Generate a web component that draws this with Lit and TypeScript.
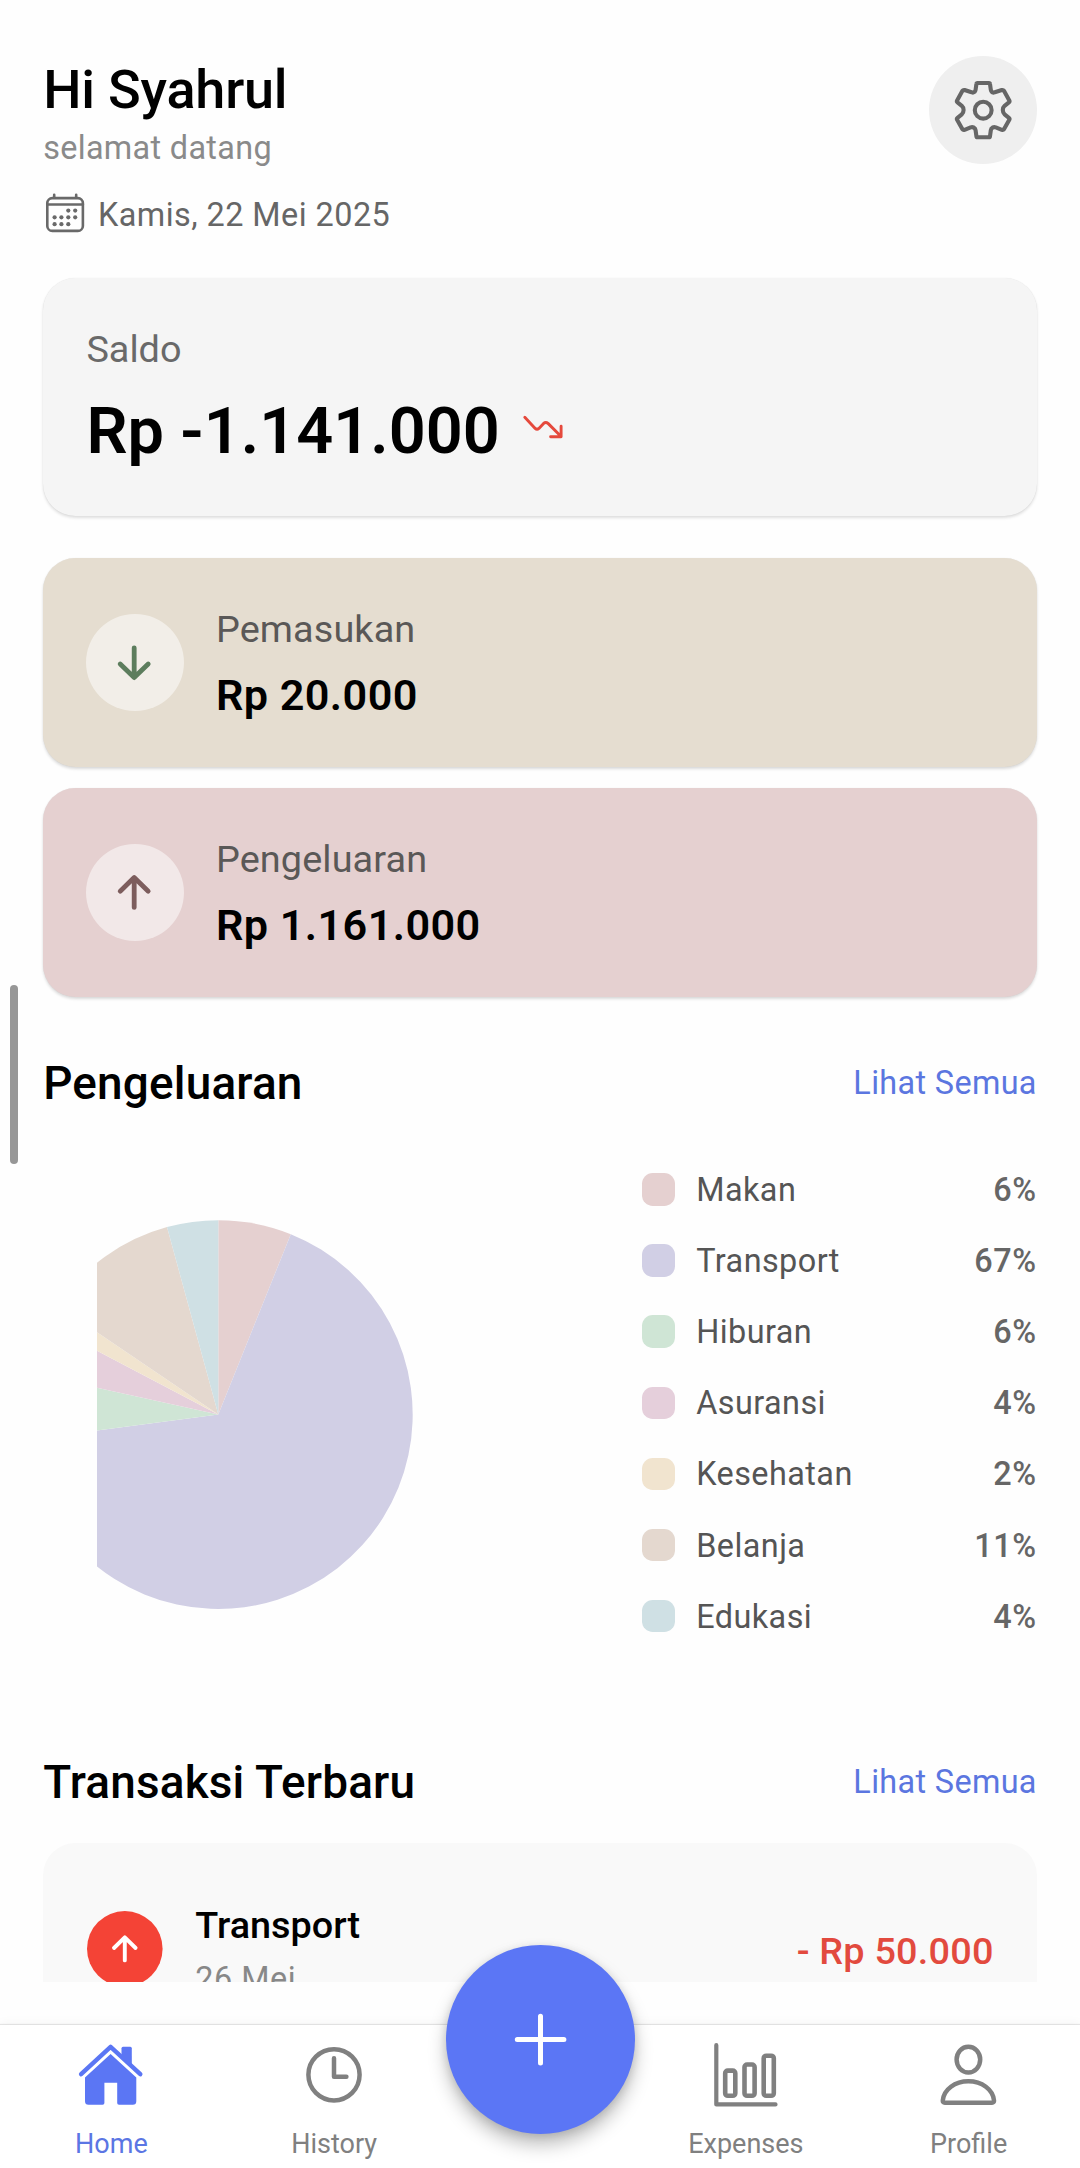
import { LitElement, html, svg, css } from "lit";
import { customElement } from "lit/decorators.js";

interface Category {
  name: string;
  percent: number;
  color: string;
  /** Angle in degrees, clockwise from the top, where the slice ends. */
  end: number;
}

const CATEGORIES: Category[] = [
  { name: "Makan", percent: 6, color: "#e5d0d0", end: 21.9 },
  { name: "Transport", percent: 67, color: "#d1cfe5", end: 262.5 },
  { name: "Hiburan", percent: 6, color: "#cfe5d5", end: 282.5 },
  { name: "Asuransi", percent: 4, color: "#e5cfdb", end: 297.8 },
  { name: "Kesehatan", percent: 2, color: "#f1e4cf", end: 304.2 },
  { name: "Belanja", percent: 11, color: "#e4d8cf", end: 344.7 },
  { name: "Edukasi", percent: 4, color: "#cfe0e4", end: 360 },
];

const RADIUS = 194.4;

function point(deg: number): string {
  const a = (deg * Math.PI) / 180;
  return `${(RADIUS * Math.sin(a)).toFixed(2)} ${(-RADIUS * Math.cos(a)).toFixed(2)}`;
}

function slice(start: number, end: number): string {
  const large = end - start > 180 ? 1 : 0;
  return `M0 0L${point(start)}A${RADIUS} ${RADIUS} 0 ${large} 1 ${point(end)}Z`;
}

const calendarIcon = svg`
  <g fill="none" stroke="#696969" stroke-width="2.6" stroke-linecap="round">
    <rect x="4.3" y="5.1" width="35.6" height="32.8" rx="5"/>
    <path d="M4.3 11.5H39.9M11.2 1.8V4.5M33.2 1.8V4.5"/>
  </g>
  <g fill="#696969">
    <circle cx="25.3" cy="17.6" r="2.1"/><circle cx="32.2" cy="17.6" r="2.1"/>
    <circle cx="11.6" cy="24.3" r="2.1"/><circle cx="18.4" cy="24.3" r="2.1"/>
    <circle cx="25.3" cy="24.3" r="2.1"/><circle cx="32.2" cy="24.3" r="2.1"/>
    <circle cx="11.6" cy="31.2" r="2.1"/><circle cx="18.4" cy="31.2" r="2.1"/>
    <circle cx="25.3" cy="31.2" r="2.1"/>
  </g>`;

const NAV_ICONS = {
  home: svg`
    <path d="M-29.9 34.2L-0.4 6.9L29.3 34.2" fill="none" stroke="currentColor" stroke-width="4.4" stroke-linecap="round" stroke-linejoin="round"/>
    <path d="M10.5 16V8.2Q10.5 6.7 12 6.7H19.3Q20.8 6.7 20.8 8.2V27Z" fill="currentColor"/>
    <path d="M-0.4 14L25.3 37.6V61.2Q25.3 64.7 21.8 64.7H8Q6.2 64.7 6.2 62.9V42.8H-6.6V62.9Q-6.6 64.7 -8.4 64.7H-22.5Q-26 64.7 -26 61.2V37.6Z" fill="currentColor"/>`,
  history: svg`
    <g fill="none" stroke="currentColor" stroke-width="4.5" stroke-linecap="round" stroke-linejoin="round">
      <circle cx="0" cy="34.8" r="25.6"/><path d="M0 18.2V36.8H12.4"/>
    </g>`,
  expenses: svg`
    <g fill="none" stroke="currentColor" stroke-width="4.6" stroke-linecap="round" stroke-linejoin="round">
      <path d="M-29.7 5.2V64.4H29.5" stroke-width="4.2"/>
      <rect x="-20.8" y="30.6" width="10.1" height="25.2" rx="2.6"/>
      <rect x="-1.5" y="24.5" width="10.1" height="31.3" rx="2.6"/>
      <rect x="17.7" y="15.7" width="10.1" height="40.1" rx="2.6"/>
    </g>`,
  profile: svg`
    <g fill="none" stroke="currentColor" stroke-width="4.5" stroke-linejoin="round">
      <ellipse cx="-0.6" cy="19.6" rx="11.8" ry="12.8"/>
      <path d="M-26.2 60.4C-25.2 49.5 -14 41.2 -0.6 41.2S24 49.5 25 60.4Q25.2 62.7 23 62.7H-24.2Q-26.4 62.7 -26.2 60.4Z"/>
    </g>`,
};

@customElement("nav-tab")
class NavTab extends LitElement {
  static properties = {
    label: {},
    icon: {},
  };
  declare label: string;
  declare icon: keyof typeof NAV_ICONS;

  static styles = css`
    :host {
      flex: 1;
      display: flex;
      flex-direction: column;
      align-items: center;
      padding-top: 15.4px;
      color: #808080;
    }
    :host([active]) {
      color: #5b76f4;
    }
    .icon {
      display: block;
      width: 80px;
      height: 70px;
    }
    .label {
      margin-top: 18px;
      font-size: 27px;
      line-height: 32px;
    }
    :host([active]) .label {
      color: #5b76e4;
    }
  `;

  render() {
    return html`
      <svg class="icon" viewBox="-40 0 80 70">${NAV_ICONS[this.icon]}</svg>
      <span class="label">${this.label}</span>
    `;
  }
}

@customElement("flow-card")
class FlowCard extends LitElement {
  static properties = {
    label: {},
    amount: {},
    kind: {},
  };
  declare label: string;
  declare amount: string;
  declare kind: "in" | "out";

  static styles = css`
    :host {
      display: flex;
      align-items: center;
      gap: 32.4px;
      height: 209px;
      padding: 0 43.2px;
      box-sizing: border-box;
      border-radius: 32.4px;
      box-shadow: 0 2px 3px rgba(0, 0, 0, 0.14), 0 0 1px rgba(0, 0, 0, 0.08);
    }
    :host([kind="in"]) {
      background: #e5ddd0;
      color: #5d7d5d;
    }
    :host([kind="out"]) {
      background: #e5d0d0;
      color: #7d5d5d;
    }
    .badge {
      width: 97.2px;
      height: 97.2px;
      border-radius: 50%;
      background: rgba(255, 255, 255, 0.5);
    }
    .badge svg {
      display: block;
      width: 97.2px;
      height: 97.2px;
    }
    .texts {
      display: flex;
      flex-direction: column;
      gap: 19.4px;
      padding-top: 5px;
    }
    .label {
      font-size: 37.8px;
      line-height: 44px;
      letter-spacing: 0.12px;
      color: #5a5857;
    }
    .amount {
      font-size: 43.2px;
      line-height: 52px;
      font-weight: 600;
      letter-spacing: 0.42px;
      color: #000;
    }
  `;

  render() {
    const arrow =
      this.kind === "in"
        ? "M0 -14.8V14.6M-14 1.4L0 15L14 1.4"
        : "M0 14.8V-14.6M-14 -1.4L0 -15L14 -1.4";
    return html`
      <div class="badge">
        <svg viewBox="-48.2 -48.6 97.2 97.2">
          <path d=${arrow} fill="none" stroke="currentColor" stroke-width="4.8" stroke-linecap="round" stroke-linejoin="round"/>
        </svg>
      </div>
      <div class="texts">
        <span class="label">${this.label}</span>
        <span class="amount">${this.amount}</span>
      </div>
    `;
  }
}

@customElement("app-root")
class AppRoot extends LitElement {
  static styles = css`
    :host {
      display: block;
      position: relative;
      width: 1080px;
      height: 2168px;
      overflow: hidden;
      background: #fefefe;
      font-family: Roboto, "Liberation Sans", sans-serif;
      color: #000;
    }
    .screen {
      display: flex;
      flex-direction: column;
      height: 2168px;
    }
    .content {
      height: 1981.6px;
      padding: 56px 43.2px 0;
      box-sizing: border-box;
      overflow: hidden;
    }
    .header {
      display: flex;
      justify-content: space-between;
      align-items: flex-start;
      height: 222px;
    }
    .greeting {
      padding-top: 2.2px;
    }
    .hello {
      font-size: 54px;
      line-height: 64px;
      font-weight: 500;
      letter-spacing: -0.2px;
    }
    .welcome {
      margin-top: 5.4px;
      font-size: 32.4px;
      line-height: 40px;
      letter-spacing: 0.32px;
      color: #8a8a8a;
    }
    .date {
      display: flex;
      align-items: center;
      gap: 11.6px;
      margin-top: 27px;
      height: 40px;
      font-size: 32.4px;
      line-height: 40px;
      letter-spacing: 0.46px;
      color: #666;
    }
    .date svg {
      width: 43.2px;
      height: 43.2px;
    }
    .settings {
      width: 108px;
      height: 108px;
      border-radius: 50%;
      background: #efefef;
    }
    .settings svg {
      display: block;
      width: 108px;
      height: 108px;
    }
    .balance {
      height: 237.6px;
      padding: 49.8px 43.2px 0;
      box-sizing: border-box;
      border-radius: 32.4px;
      background: #f5f5f5;
      box-shadow: 0 2px 3px rgba(0, 0, 0, 0.12), 0 0 1px rgba(0, 0, 0, 0.1);
    }
    .balance-label {
      font-size: 37.8px;
      line-height: 43px;
      color: #696969;
    }
    .balance-row {
      display: flex;
      align-items: center;
      gap: 18px;
      margin-top: 22.7px;
      height: 76px;
    }
    .balance-amount {
      font-size: 64.8px;
      line-height: 77px;
      font-weight: 600;
    }
    .balance-row svg {
      width: 48px;
      height: 48px;
    }
    .flows {
      display: flex;
      flex-direction: column;
      gap: 21px;
      margin-top: 42.2px;
    }
    .section {
      display: flex;
      justify-content: space-between;
      align-items: center;
      margin-top: 59.2px;
      height: 54px;
    }
    .section-title {
      font-size: 45.9px;
      line-height: 54px;
      font-weight: 500;
      letter-spacing: 0.18px;
    }
    .section-link {
      font-size: 32.4px;
      line-height: 40px;
      letter-spacing: 0.34px;
      color: #5b76e0;
    }
    .spending {
      display: flex;
      justify-content: space-between;
      align-items: flex-start;
      margin-top: 59.6px;
      height: 466.2px;
      padding-left: 54px;
    }
    .pie {
      margin-top: 50.4px;
      width: 316px;
      height: 389.2px;
    }
    .legend {
      display: flex;
      flex-direction: column;
      gap: 31.05px;
      width: 394.6px;
    }
    .legend-row {
      display: flex;
      align-items: center;
      height: 40px;
      font-size: 32.4px;
      line-height: 40px;
      color: #555;
    }
    .swatch {
      width: 32.4px;
      height: 32.4px;
      margin-right: 21.6px;
      border-radius: 10.8px;
    }
    .legend-name {
      flex: 1;
      padding-top: 1.4px;
      letter-spacing: 0.44px;
    }
    .legend-percent {
      padding-top: 1.4px;
      font-weight: 500;
      letter-spacing: 0.6px;
      color: #666;
    }
    .recent {
      margin-top: 119px;
    }
    .transactions {
      margin-top: 34.7px;
      height: 300px;
      padding: 60px 43.2px 0;
      border-radius: 32.4px;
      background: #f9f9f9;
    }
    .transaction {
      display: flex;
      align-items: center;
      height: 95.2px;
    }
    .transaction svg {
      width: 75.6px;
      height: 75.6px;
      margin: 0 32.4px 5px 0.9px;
    }
    .transaction-texts {
      flex: 1;
      display: flex;
      flex-direction: column;
      gap: 11.2px;
    }
    .transaction-name {
      font-size: 37.8px;
      line-height: 44px;
      font-weight: 500;
    }
    .transaction-date {
      font-size: 32.4px;
      line-height: 40px;
      letter-spacing: 0.5px;
      color: #888;
    }
    .transaction-amount {
      font-size: 37.8px;
      line-height: 44px;
      font-weight: 500;
      letter-spacing: 0.22px;
      color: #e24a3e;
    }
    .nav {
      display: flex;
      height: 143.4px;
      margin-top: auto;
      background: #fff;
      box-shadow: 0 -1px 1px rgba(0, 0, 0, 0.09), 0 -2px 10px rgba(0, 0, 0, 0.04);
    }
    .fab {
      width: 189px;
      height: 189px;
      margin-top: -80px;
      border-radius: 50%;
      background: #5b76f5;
      box-shadow: 0 11px 18px rgba(0, 0, 0, 0.25), 0 2px 8px rgba(0, 0, 0, 0.12);
    }
    .fab svg {
      display: block;
      width: 189px;
      height: 189px;
    }
    .scrollbar {
      position: absolute;
      left: 10px;
      top: 985.4px;
      width: 8px;
      height: 178.6px;
      border-radius: 4px;
      background: #979797;
    }
  `;

  render() {
    return html`
      <div class="screen">
        <main class="content">
          <header class="header">
            <div class="greeting">
              <div class="hello">Hi Syahrul</div>
              <div class="welcome">selamat datang</div>
              <div class="date">
                <svg viewBox="0 0 43.2 43.2">${calendarIcon}</svg>
                <span>Kamis, 22 Mei 2025</span>
              </div>
            </div>
            <div class="settings">
              <svg viewBox="-54 -54 108 108">
                <g fill="none" stroke="#666" stroke-width="4.1" stroke-linejoin="round">
                  <circle cx="0.2" cy="0.2" r="8.4"/>
                  <path d="M-5.4 -27H5.8Q6.9 -27 7 -26L7.8 -20.2Q8.2 -17.6 10.6 -17.4L12.6 -18L18.8 -20Q20.3 -20.3 21.1 -19.1L26.3 -9.6Q26.9 -8.4 25.9 -7.6L21.6 -4.2Q19.8 -2.6 19.8 0T21.6 4.4L25.9 7.8Q26.9 8.6 26.3 9.8L21.1 19Q20.3 20.2 18.8 19.8L12.8 17.4Q10.2 16.6 8.4 18.6L7.8 20.4L7 26.2Q6.9 27.2 5.8 27.2H-5.4Q-6.5 27.2 -6.6 26.2L-7.4 20.4L-8 18.6Q-9.8 16.6 -12.4 17.4L-18.4 19.8Q-19.9 20.2 -20.7 19L-25.9 9.8Q-26.5 8.6 -25.5 7.8L-21.2 4.4Q-19.4 2.6 -19.4 0T-21.2 -4.2L-25.5 -7.6Q-26.5 -8.4 -25.9 -9.6L-20.7 -19.1Q-19.9 -20.3 -18.4 -20L-12.2 -18L-10.2 -17.4Q-7.8 -17.6 -7.4 -20.2L-6.6 -26Q-6.5 -27 -5.4 -27Z"/>
                </g>
              </svg>
            </div>
          </header>

          <section class="balance">
            <div class="balance-label">Saldo</div>
            <div class="balance-row">
              <span class="balance-amount">Rp -1.141.000</span>
              <svg viewBox="0 0 48 48">
                <path d="M6.8 10.2L17.2 21.4Q19 23.2 20.9 21.4L25.6 16.4Q27.8 14.4 30 16.4L42.6 29M32.6 29.8H43.1V19.2" fill="none" stroke="#e5493c" stroke-width="2.9" stroke-linecap="round" stroke-linejoin="round"/>
              </svg>
            </div>
          </section>

          <div class="flows">
            <flow-card kind="in" label="Pemasukan" amount="Rp 20.000"></flow-card>
            <flow-card kind="out" label="Pengeluaran" amount="Rp 1.161.000"></flow-card>
          </div>

          <div class="section">
            <span class="section-title">Pengeluaran</span>
            <span class="section-link">Lihat Semua</span>
          </div>
          <section class="spending">
            <svg class="pie" viewBox="-121.3 -194.6 316 389.2">
              ${CATEGORIES.map(
                (c, i) =>
                  svg`<path d=${slice(i ? CATEGORIES[i - 1].end : 0, c.end)} fill=${c.color}/>`
              )}
            </svg>
            <div class="legend">
              ${CATEGORIES.map(
                (c) => html`
                  <div class="legend-row">
                    <span class="swatch" style="background:${c.color}"></span>
                    <span class="legend-name">${c.name}</span>
                    <span class="legend-percent">${c.percent}%</span>
                  </div>
                `
              )}
            </div>
          </section>

          <div class="section recent">
            <span class="section-title">Transaksi Terbaru</span>
            <span class="section-link">Lihat Semua</span>
          </div>
          <section class="transactions">
            <div class="transaction">
              <svg viewBox="-37.8 -37.8 75.6 75.6">
                <circle r="37.8" fill="#f44336"/>
                <path d="M0 11.6V-11.2M-10.8 -0.8L0 -11.4L10.8 -0.8" fill="none" stroke="#fff" stroke-width="3.9" stroke-linecap="round" stroke-linejoin="round"/>
              </svg>
              <div class="transaction-texts">
                <span class="transaction-name">Transport</span>
                <span class="transaction-date">26 Mei</span>
              </div>
              <span class="transaction-amount">- Rp 50.000</span>
            </div>
          </section>
        </main>

        <nav class="nav">
          <nav-tab active label="Home" icon="home"></nav-tab>
          <nav-tab label="History" icon="history"></nav-tab>
          <div class="fab">
            <svg viewBox="-94.5 -94.5 189 189">
              <path d="M0 -23.2V23.4M-23.2 0H23.4" fill="none" stroke="#fff" stroke-width="5" stroke-linecap="round"/>
            </svg>
          </div>
          <nav-tab label="Expenses" icon="expenses"></nav-tab>
          <nav-tab label="Profile" icon="profile"></nav-tab>
        </nav>
      </div>
      <div class="scrollbar"></div>
    `;
  }
}
